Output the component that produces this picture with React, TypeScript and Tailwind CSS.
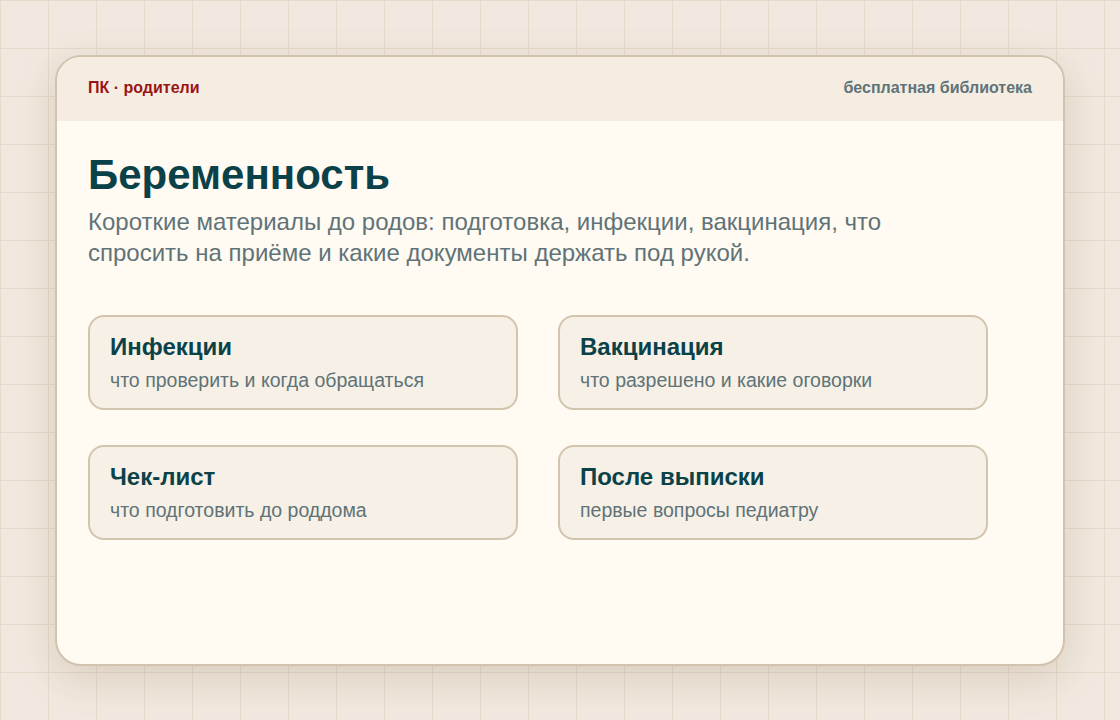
import React from "react";

type Topic = {
  title: string;
  note: string;
};

const topics: Topic[] = [
  { title: "Инфекции", note: "что проверить и когда обращаться" },
  { title: "Вакцинация", note: "что разрешено и какие оговорки" },
  { title: "Чек-лист", note: "что подготовить до роддома" },
  { title: "После выписки", note: "первые вопросы педиатру" },
];

const TopicCard: React.FC<{ topic: Topic }> = ({ topic }) => {
  return (
    <div className="h-[95px] rounded-[16px] border-2 border-[#d3c4ae] bg-[#f6f0e6] px-[20px] pt-[15px]">
      <h3 className="text-[24px] font-bold leading-[30px] text-[#0b4149]">
        {topic.title}
      </h3>
      <p className="mt-[6px] text-[19.5px] leading-[24px] text-[#5f7378]">
        {topic.note}
      </p>
    </div>
  );
};

export default function App() {
  return (
    <div
      className="min-h-[720px] w-full bg-[#f1e9df] px-[55px] pt-[55px] pb-[54px] font-['Liberation_Sans',Arial,sans-serif]"
      style={{
        backgroundImage:
          "linear-gradient(to right, #e6dacb 1px, transparent 1px), linear-gradient(to bottom, #e6dacb 1px, transparent 1px)",
        backgroundSize: "48px 48px",
      }}
    >
      <div className="flex h-[611px] flex-col overflow-hidden rounded-[26px] border-2 border-[#d2c3ae] bg-[#fffaf2] shadow-[0_12px_40px_rgba(110,80,40,0.18)]">
        {/* шапка */}
        <div className="flex h-[64px] shrink-0 items-start justify-between bg-[#f5ede2] px-[31px] pt-[19px]">
          <span className="text-[16px] font-bold leading-[24px] text-[#9b1414]">
            ПК · родители
          </span>
          <span className="text-[16px] font-bold leading-[24px] text-[#5f7378]">
            бесплатная библиотека
          </span>
        </div>

        <div className="px-[31px] pt-[28px]">
          <h1 className="text-[42px] font-bold leading-[52px] text-[#0b4149]">
            Беременность
          </h1>
          <p className="mt-[5px] max-w-[830px] text-[24px] leading-[31px] text-[#5f7378]">
            Короткие материалы до родов: подготовка, инфекции, вакцинация, что
            спросить на приёме и какие документы держать под рукой.
          </p>

          <div className="mt-[47px] grid max-w-[900px] grid-cols-2 gap-x-[40px] gap-y-[35px]">
            {topics.map((t) => (
              <TopicCard key={t.title} topic={t} />
            ))}
          </div>
        </div>
      </div>
    </div>
  );
}
